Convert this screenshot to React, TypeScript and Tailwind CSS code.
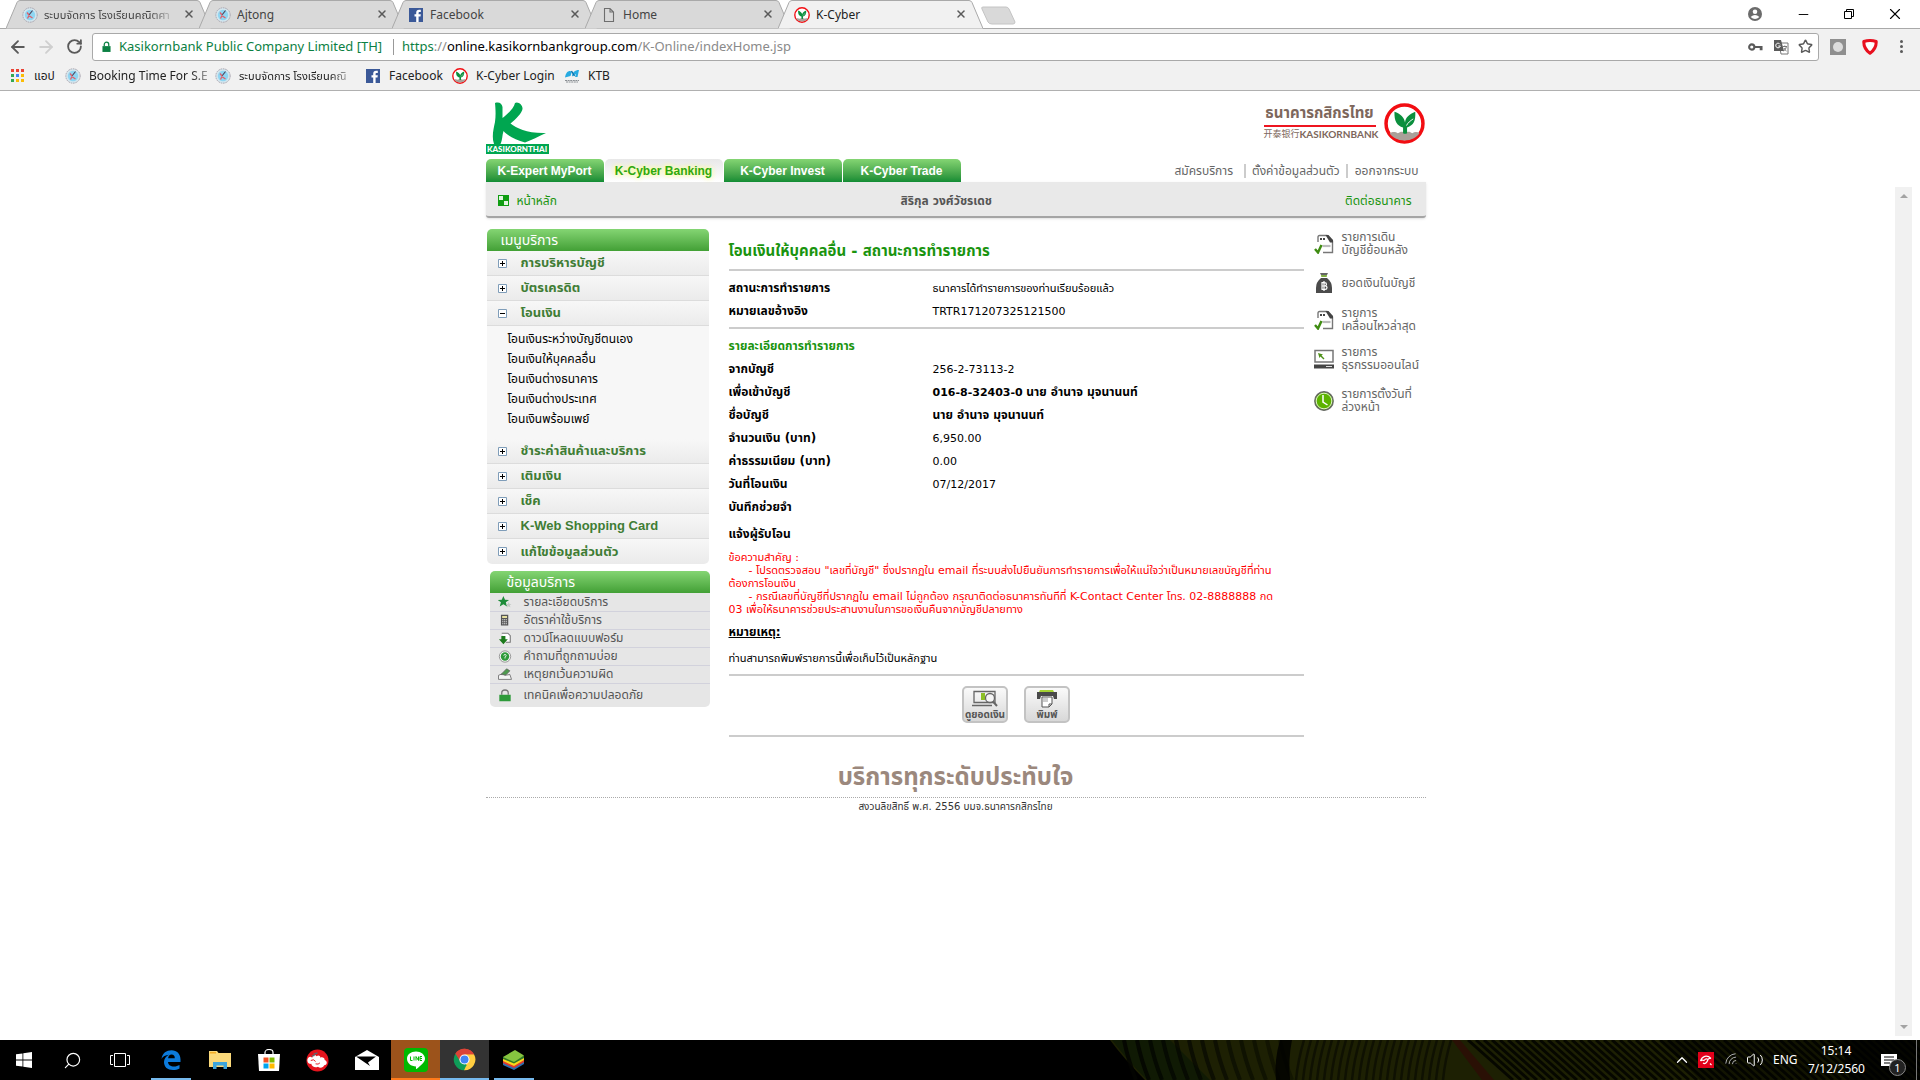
import React from "react";
import { Star, RotateCw, Search, Wifi, Volume2, ChevronUp, Minus, X, ArrowLeft, ArrowRight } from "lucide-react";

const ui = "font-['Noto_Sans','Noto_Sans_Thai',sans-serif]";
const body = "font-['DejaVu_Sans','Noto_Sans_Thai',sans-serif]";

function SchoolIcon() {
  return (
    <svg viewBox="0 0 16 16" className="size-4 shrink-0" aria-hidden="true">
      <circle cx="8" cy="8" r="7.2" fill="#d3e6ee" stroke="#a9a4ae" strokeWidth="1" strokeDasharray="1.6 .8" />
      <circle cx="8" cy="8" r="5.2" fill="#8fd6f2" />
      <path d="M10.500 3.500 7 8" stroke="#4a3b52" strokeWidth="1.100" />
      <path d="M5 5.500l2 2.500M7.500 9l3 2M5.500 11.500l1.500-3" stroke="#e0606a" strokeWidth="1.300" />
    </svg>
  );
}

function FacebookIcon() {
  return (
    <svg viewBox="0 0 16 16" className="size-4 shrink-0" aria-hidden="true">
      <path d="M1 1h14v14H1z" fill="#3b5998" />
      <path d="M8.200 15V9.400H6.500V7.200h1.700V5.700c0-1.900 1-2.900 2.900-2.900h1.700V5h-1.100c-.9 0-1.100.4-1.100 1v1.200h2.200l-.3 2.200h-1.900V15z" fill="#fff" />
    </svg>
  );
}

function PageIcon() {
  return (
    <svg viewBox="0 0 16 16" className="size-4 shrink-0" fill="none" stroke="#6e6e6e" strokeWidth="1.1" aria-hidden="true">
      <path d="M3.500 1.500h5.500l3.500 3.500v9.500h-9zM9 1.500V5h3.500" />
    </svg>
  );
}

function Emblem({ className }: { className: string }) {
  return (
    <svg viewBox="0 0 40 40" className={className} aria-hidden="true">
      <circle cx="20" cy="20" r="18" fill="#fff" stroke="#f20d12" strokeWidth="3.4" />
      <path d="M5.500 29.500c3-2 6-1.500 8 0 2.500-2 5-2 6.500-.5 3-1.500 5.500-1.500 7.500.5 2.500-1.500 5-1.500 7 0-3 4.500-8 7-14.500 7s-11.500-2.500-14.500-7z" fill="#aaa099" />
      <path d="M18.600 29.500V24C12.500 21.500 10 18.500 10.200 8.500c5.800 2 9.800 5.500 10.300 10.500.5-5 4-8 10-10.500.5 9-1.500 13-8 15.500v5.500q-2 1.200-3.900 0z" fill="#0b8f3d" />
      <path d="M22 22c1-2.500 3.500-4.500 6.500-6.500" stroke="#fff" strokeWidth=".9" fill="none" />
    </svg>
  );
}

function KtbIcon() {
  return (
    <svg viewBox="0 0 16 16" className="size-4 shrink-0" aria-hidden="true">
      <path d="M1 9.500C2 3.500 5 2 8 3.500L6.500 8zM8 8.500c0-4 3-6.500 7-6.500L13.500 9H11l1-3z" fill="#27aae1" />
      <path d="M7.500 3l3 5" stroke="#0b6ea8" strokeWidth="1.300" />
      <path d="M1 12.500h14M2 14h12" stroke="#8a8f94" strokeWidth="1" strokeDasharray="2 .6" />
    </svg>
  );
}

const tabs = [
  { title: "ระบบจัดการ โรงเรียนคณิตศา", icon: <SchoolIcon />, fade: true },
  { title: "Ajtong", icon: <SchoolIcon /> },
  { title: "Facebook", icon: <FacebookIcon /> },
  { title: "Home", icon: <PageIcon /> },
  { title: "K-Cyber", icon: <Emblem className="size-4 shrink-0" />, active: true },
];

function TabStrip() {
  return (
    <div className="flex h-[28px] items-stretch bg-white pl-[6px]">
      {tabs.map((t, i) => (
        <div key={i} className={`relative flex w-[205px] items-center pl-[16px] pr-[14px] ${i ? "-ml-[12px]" : ""} ${t.active ? "z-10" : ""}`}>
          <svg className="absolute inset-0 h-[29px] w-full" viewBox="0 0 205 29" preserveAspectRatio="none" aria-hidden="true">
            <path d="M0 28.500 11 2.500Q12 .5 14 .5H191Q193 .5 194 2.500L205 28.500" fill={t.active ? "#f1f1f1" : "#d9d9d9"} stroke="#a9a9a9" />
          </svg>
          <span className="relative flex pt-px">{t.icon}</span>
          <span className={`relative ml-[6px] flex-1 overflow-hidden whitespace-nowrap pt-px leading-5 ${t.active ? "text-[#222]" : "text-[#444]"} ${t.fade ? "text-[11px] [mask-image:linear-gradient(to_right,black_80%,transparent)]" : "text-[12px]"}`}>{t.title}</span>
          <button aria-label="ปิดแท็บ" className="relative ml-1 flex size-4 items-center justify-center text-[#5a5a5a]">
            <X size={12} strokeWidth={3} />
          </button>
        </div>
      ))}
      <button aria-label="แท็บใหม่" className="-ml-[2px] mt-[6px] h-[19px] w-[36px]">
        <svg viewBox="0 0 36 19" className="size-full" aria-hidden="true">
          <path d="M2 1h23q2 0 3 2l6 13q0 2-2 2H11q-3 0-4-2L1 3q-1-2 1-2z" fill="#d9d9d9" stroke="#c4c4c4" />
        </svg>
      </button>
      <div className="ml-auto flex items-center pr-[3px] text-black">
        <button aria-label="บัญชีผู้ใช้" className="flex w-[45px] justify-center">
          <svg viewBox="0 0 16 16" className="size-[14px]" aria-hidden="true">
            <circle cx="8" cy="8" r="8" fill="#6b6b6b" />
            <circle cx="8" cy="5.500" r="2.600" fill="#fff" />
            <path d="M3 11.500q5-4.500 10 0-5 4.500-10 0" fill="#fff" />
          </svg>
        </button>
        <button aria-label="ย่อ" className="ml-[4px] flex w-[45px] justify-center"><Minus size={15} strokeWidth={1.500} /></button>
        <button aria-label="คืนขนาด" className="flex w-[46px] justify-center">
          <svg viewBox="0 0 10 10" className="size-[10px]" fill="none" stroke="#000" aria-hidden="true">
            <path d="M.5 2.500h7v7h-7zM2.500 2.500v-2h7v7h-2" />
          </svg>
        </button>
        <button aria-label="ปิด" className="flex w-[45px] justify-center"><X size={18} strokeWidth={1.500} /></button>
      </div>
    </div>
  );
}

function Toolbar() {
  return (
    <div className="flex h-[36px] items-center border-t border-[#a9a9a9] bg-[#f1f1f1] text-[#5a5a5a]">
      <button aria-label="ย้อนกลับ" className="ml-[8px] flex w-5 justify-center"><ArrowLeft size={20} strokeWidth={2.200} /></button>
      <button aria-label="ไปข้างหน้า" className="ml-[8px] flex w-5 justify-center text-[#cfcfcf]"><ArrowRight size={20} strokeWidth={2.200} /></button>
      <button aria-label="โหลดซ้ำ" className="ml-[8px] flex w-5 justify-center"><RotateCw size={17} strokeWidth={2.600} /></button>
      <div className="ml-[8px] flex h-[28px] flex-1 items-center rounded-[3px] border border-[#a9a9a9] bg-white pl-[9px]">
        <svg viewBox="0 0 10 12" className="h-3 w-[9px]" aria-hidden="true">
          <path d="M.5 5h9v6.500h-9z" fill="#0b8043" />
          <path d="M2.500 5V3.200a2.500 2.500 0 0 1 5 0V5" fill="none" stroke="#0b8043" strokeWidth="1.400" />
        </svg>
        <span className="ml-[8px] whitespace-nowrap text-[13px] text-[#0b8043]">Kasikornbank Public Company Limited [TH]</span>
        <span className="ml-[11px] h-[16px] w-px bg-[#999]" />
        <div className="ml-[8px] flex-1 whitespace-nowrap text-[13px] text-[#8a8a8a]">
          <span className="text-[#0b8043]">https</span>://<span className="text-black">online.kasikornbankgroup.com</span>/K-Online/indexHome.jsp
        </div>
        <button aria-label="รหัสผ่าน" className="flex w-[25px] justify-center">
          <svg viewBox="0 0 16 8" className="h-2 w-[15px]" aria-hidden="true">
            <circle cx="4" cy="4" r="2.800" fill="none" stroke="#5a5a5a" strokeWidth="2.200" />
            <path d="M7 3h8.500v4.500h-3V5H7z" fill="#5a5a5a" />
          </svg>
        </button>
        <button aria-label="แปลภาษา" className="flex w-[25px] justify-center">
          <svg viewBox="0 0 16 16" className="size-4" aria-hidden="true">
            <path d="M6 4h9v11H8z" fill="#fff" stroke="#777" />
            <path d="M1 1h7l3 11H1z" fill="#5a5a5a" />
            <path d="M7 5.300A2.300 2.300 0 1 0 7.300 7H5.300" fill="none" stroke="#fff" />
            <path d="M9.500 7.500h4.500M11.800 6.500v1M10.500 12q2.500-1.500 2.800-4M11 9q.8 2 2.500 3" fill="none" stroke="#777" />
          </svg>
        </button>
        <button aria-label="บุ๊กมาร์ก" className="flex w-[25px] justify-center"><Star size={15} strokeWidth={2.300} /></button>
      </div>
      <button aria-label="ส่วนขยาย" className="ml-[11px] flex size-4 items-center justify-center bg-[#8f8f8f]"><span className="size-[10px] rounded-full bg-[#dcdcdc]" /></button>
      <button aria-label="โล่ป้องกัน" className="ml-[16px]">
        <svg viewBox="0 0 16 16" className="size-4" aria-hidden="true">
          <path d="M1.800 2.500Q8 .5 14.200 2.500 14.500 9.500 8 14.300 1.500 9.500 1.800 2.500z" fill="#fff" stroke="#e8101f" strokeWidth="3" strokeLinejoin="round" />
        </svg>
      </button>
      <button aria-label="เมนู" className="ml-[22px] mr-[16px] flex w-1 flex-col gap-[2px]">
        <span className="size-[3px] rounded-full bg-[#5a5a5a]" /><span className="size-[3px] rounded-full bg-[#5a5a5a]" /><span className="size-[3px] rounded-full bg-[#5a5a5a]" />
      </button>
    </div>
  );
}

const appColors = ["#ea4335", "#ea4335", "#ea4335", "#34a853", "#4285f4", "#fbbc05", "#34a853", "#fbbc05", "#fbbc05"];

function BookmarkBar() {
  return (
    <nav className="flex h-[27px] items-center border-b border-[#b0b0b0] bg-[#f1f1f1] pb-[3px] pl-[11px] text-[12px] leading-5 text-[#222]">
      <a href="#apps" className="flex w-[54px] items-center gap-[10px]">
        <span className="grid grid-cols-3 gap-[2px]">
          {appColors.map((c, i) => <span key={i} className="size-[3px]" style={{ backgroundColor: c }} />)}
        </span>
        แอป
      </a>
      <a href="#booking" className="flex w-[150px] items-center gap-[8px] whitespace-nowrap"><SchoolIcon /><span className="[mask-image:linear-gradient(to_right,black_85%,#0006)]">Booking Time For S.E</span></a>
      <a href="#school" className="flex w-[150px] items-center gap-[8px] whitespace-nowrap"><SchoolIcon /><span className="text-[11px] [mask-image:linear-gradient(to_right,black_85%,#0006)]">ระบบจัดการ โรงเรียนคณิ</span></a>
      <a href="#facebook" className="flex w-[87px] items-center gap-[8px]"><FacebookIcon />Facebook</a>
      <a href="#kcyber" className="flex w-[112px] items-center gap-[8px] whitespace-nowrap"><Emblem className="size-4 shrink-0" />K-Cyber Login</a>
      <a href="#ktb" className="flex items-center gap-[8px]"><KtbIcon />KTB</a>
    </nav>
  );
}

function BankHeader() {
  return (
    <header>
      <div className="flex h-[68px] items-start justify-between pt-[11px]">
        <div className="w-[63px]">
          <svg viewBox="0 0 63 42" className="block h-[42px] w-full" aria-hidden="true">
            <path d="M9 1c4-1.500 7 .5 7.500 4v11C22 12 28 6 29 1c3-2 8 2 7.500 6C36 11 30 17 24.500 21.500 31 26.500 41 31.500 60 31c-7 3.500-15 7-21 9.500C30 38 22 34 17.500 29c-1.500 5-1 9-3 13H8C5.500 35 7.500 27 9 20c1-7 .5-14 0-19z" fill="#00a650" />
          </svg>
          <div className="bg-[#00a650] text-center font-['Lato',sans-serif] text-[8px] font-black leading-[10px] text-white">KASIKORNTHAI</div>
        </div>
        <div className="flex items-start pr-px pt-px">
          <div className="mr-[8px] w-[112px] text-[#7d675c]">
            <div className="whitespace-nowrap border-b-2 border-[#ee1520] pb-[2px] text-center text-[15px] font-bold leading-[20px]">ธนาคารกสิกรไทย</div>
            <div className="mt-[2px] flex items-center justify-between whitespace-nowrap leading-[10px]"><span className="font-['Noto_Sans_CJK_SC',sans-serif] text-[9px]">开泰银行</span><span className="font-['Lato',sans-serif] text-[10px] font-bold">KASIKORNBANK</span></div>
          </div>
          <Emblem className="size-[41px]" />
        </div>
      </div>
      <div className="flex h-[23px] items-center justify-between">
        <nav className="flex gap-px font-['Liberation_Sans',sans-serif] text-[12px] font-bold leading-[23px] text-white">
          {["K-Expert MyPort", "K-Cyber Banking", "K-Cyber Invest", "K-Cyber Trade"].map((t, i) => (
            <a key={t} href="#tab" className={`h-[23px] w-[118px] rounded-t-[5px] pt-px text-center ${i === 1 ? "bg-linear-to-b from-[#e8e8e8] to-white text-[#2fa80f] [text-shadow:0_0_5px_#ff9,0_0_5px_#ff9]" : "bg-linear-to-b from-[#84d573] to-[#0f8c34]"}`}>{t}</a>
          ))}
        </nav>
        <nav className="flex items-center whitespace-nowrap pr-[7px] text-[12px] leading-[14px] text-[#666]">
          <a href="#apply" className="border-r-2 border-[#ccc] pr-[11px]">สมัครบริการ</a>
          <a href="#settings" className="border-r-2 border-[#ccc] px-[6px]">ตั้งค่าข้อมูลส่วนตัว</a>
          <a href="#logout" className="pl-[7px]">ออกจากระบบ</a>
        </nav>
      </div>
      <div className="flex h-[36px] items-center rounded-b-[3px] border-b-2 border-[#a5a5a5] bg-[#e9e9e9] pl-[12px] pr-[14px] pt-[4px] text-[12px] text-[#1a940f] shadow-sm">
        <a href="#home" className="flex w-[403px] items-center gap-[8px]">
          <svg viewBox="0 0 11 11" className="mb-[2px] size-[11px]" aria-hidden="true"><path d="M0 0h11v11H0z" fill="#0f9d12" /><path d="M1 1h4v4H1zM6 6h4v4H6z" fill="#e4f6e2" /></svg>
          หน้าหลัก
        </a>
        <span className="text-[12px] font-bold text-[#555]">สิริกุล วงศ์วัชรเดช</span>
        <a href="#contact" className="ml-auto">ติดต่อธนาคาร</a>
      </div>
    </header>
  );
}

function MenuRow({ label, open, last }: { label: string; open?: boolean; last?: boolean }) {
  return (
    <button className={`flex h-[25px] w-full items-center whitespace-nowrap bg-linear-to-b from-[#f7f7f7] to-[#ebebeb] pl-[11px] text-left font-['Liberation_Sans','Noto_Sans_Thai',sans-serif] text-[13px] font-bold text-[#3f7d35] ${last ? "rounded-b-[5px]" : "border-b border-[#dcdcdc]"}`} aria-expanded={!!open}>
      <svg viewBox="0 0 9 9" className="mr-[14px] size-[9px]" aria-hidden="true">
        <path d="M.5.5h8v8h-8z" fill="#fff" stroke="#7f9db9" />
        <path d={open ? "M2 4.500h5" : "M2 4.500h5M4.500 2v5"} stroke="#000" />
      </svg>
      {label}
    </button>
  );
}

const infoIcons = [
  <path key="a" d="M6 0l2 4.500 5 .3-4 3 1.500 5L6 10l-4.500 2.800L3 7.800-1 4.800l5-.3z" fill="#1e8c3a" />,
  <g key="b"><path d="M3 1h9v13H3z" fill="#555" /><path d="M4.500 2.500h6v2.500h-6z" fill="#e6e0a0" /><path d="M4.500 7h6M4.500 9.500h6M4.500 12h6" stroke="#ddd" strokeWidth="1.300" strokeDasharray="1.500 .7" /></g>,
  <g key="c"><path d="M4 1.500h7.500l3 3v8H9" fill="#fff" stroke="#777" strokeWidth="1.300" /><path d="M3.500 5h5v4h3L6 15 .5 9h3z" fill="#1c7a1c" /></g>,
  <g key="d"><circle cx="8" cy="8" r="7" fill="#f5f5f5" stroke="#888" /><circle cx="8" cy="8" r="5.200" fill="#2e9a3a" /><path d="M6.500 7q0-1.500 1.500-1.500T9.500 7q0 1-1.500 1.500v2" stroke="#fff" fill="none" /></g>,
  <g key="e"><path d="M0 9l5-2 3 2 6-1 2 6H0z" fill="#f5f5f5" stroke="#666" /><path d="M3 8l7-7 4 2.500-5 5z" fill="#4d9b4d" stroke="#666" /></g>,
  <g key="f"><path d="M1 7h14v8H1z" fill="#2e9a3a" /><path d="M4 7V5a4 3.800 0 0 1 8 0v2" stroke="#777" strokeWidth="1.600" fill="none" /></g>,
];
const infoItems = ["รายละเอียดบริการ", "อัตราค่าใช้บริการ", "ดาวน์โหลดแบบฟอร์ม", "คำถามที่ถูกถามบ่อย", "เหตุยกเว้นความผิด", "เทคนิคเพื่อความปลอดภัย"];

function Sidebar() {
  return (
    <aside className="w-[224px] pl-px">
      <h2 className="h-[22px] w-[222px] rounded-t-[5px] bg-linear-to-b from-[#84d573] to-[#42a035] pl-[14px] text-[14px] leading-[22px] text-white">เมนูบริการ</h2>
      <div className="w-[222px]">
        <MenuRow label="การบริหารบัญชี" />
        <MenuRow label="บัตรเครดิต" />
        <MenuRow label="โอนเงิน" open />
        <ul className="h-[113px] bg-[#f7f7f7] pl-[21px] pt-[3px] text-[12px] leading-[20px] text-black">
          {["โอนเงินระหว่างบัญชีตนเอง", "โอนเงินให้บุคคลอื่น", "โอนเงินต่างธนาคาร", "โอนเงินต่างประเทศ", "โอนเงินพร้อมเพย์"].map((t) => (
            <li key={t}><a href="#transfer">{t}</a></li>
          ))}
        </ul>
        <MenuRow label="ชำระค่าสินค้าและบริการ" />
        <MenuRow label="เติมเงิน" />
        <MenuRow label="เช็ค" />
        <MenuRow label="K-Web Shopping Card" />
        <MenuRow label="แก้ไขข้อมูลส่วนตัว" last />
      </div>
      <section className="ml-[3px] mt-[7px] w-[220px]">
        <h2 className="h-[22px] rounded-t-[5px] bg-linear-to-b from-[#84d573] to-[#42a035] pl-[17px] text-[14px] leading-[22px] text-white">ข้อมูลบริการ</h2>
        <ul className="overflow-hidden rounded-b-[5px] bg-[#e6e6e6] pb-[3px] pt-px text-[12px] text-[#555]">
          {infoItems.map((t, i) => (
            <li key={t} className={`border-[#d2d2dc] ${i < 5 ? "border-b" : "pt-[3px]"}`}>
              <a href="#info" className="flex h-[17px] items-center whitespace-nowrap pl-[8px] leading-[17px]">
                <svg viewBox="0 0 16 16" className="mr-[12px] h-[13px] w-[14px]" aria-hidden="true">
                  {infoIcons[i]}
                  {i === 0 && <path d="M12.500 7.500l1 2.300 2.500.2-2 1.500.7 2.500-2.200-1.300-2.200 1.300.7-2.500-2-1.500 2.500-.2z" fill="#c3c9c5" />}
                </svg>
                {t}
              </a>
            </li>
          ))}
        </ul>
      </section>
    </aside>
  );
}

type Row = [string, React.ReactNode];
const payeeName = <b className="text-[12px]">นาย อำนาจ มุจนานนท์</b>;
const rows: Row[] = [
  ["จากบัญชี", "256-2-73113-2"],
  ["เพื่อเข้าบัญชี", <><b>016-8-32403-0</b> {payeeName}</>],
  ["ชื่อบัญชี", payeeName],
  ["จำนวนเงิน (บาท)", "6,950.00"],
  ["ค่าธรรมเนียม (บาท)", "0.00"],
  ["วันที่โอนเงิน", "07/12/2017"],
  ["บันทึกช่วยจำ", ""],
];

function Rows({ data }: { data: Row[] }) {
  return (
    <table className="w-full text-left leading-[23px]">
      <tbody>
        {data.map(([k, v]) => (
          <tr key={k} className="h-[23px]"><th className="w-[204px] p-0 text-[12px] font-bold">{k}</th><td className="p-0">{v}</td></tr>
        ))}
      </tbody>
    </table>
  );
}

function ActionButton({ label, children }: { label: string; children: React.ReactNode }) {
  return (
    <button className="flex h-[37px] w-[46px] flex-col items-center rounded-[5px] border-2 border-[#c3c3c3] bg-linear-to-b from-[#fafafa] to-[#d8d8d8] pt-[2px] text-[#555]">
      <svg viewBox="0 0 26 18" className="h-[18px] w-[26px]" fill="none" aria-hidden="true">{children}</svg>
      <span className="whitespace-nowrap text-[10px] font-bold leading-[13px]">{label}</span>
    </button>
  );
}

function Detail() {
  return (
    <main className="ml-[19px] min-w-0 flex-1 pt-[8px] text-[11px] leading-[13px] text-black">
      <h1 className="h-[34px] border-b-2 border-[#ccc] text-[15px] font-bold leading-[28px] text-[#1a940f]">โอนเงินให้บุคคลอื่น - สถานะการทำรายการ</h1>
      <div className="h-[58px] border-b-2 border-[#ccc] pt-[6px]">
        <Rows data={[["สถานะการทำรายการ", "ธนาคารได้ทำรายการของท่านเรียบร้อยแล้ว"], ["หมายเลขอ้างอิง", "TRTR171207325121500"]]} />
      </div>
      <h2 className="pt-[6px] text-[12px] font-bold leading-[23px] text-[#1a940f]">รายละเอียดการทำรายการ</h2>
      <Rows data={rows} />
      <p className="mt-[9px] text-[12px] font-bold">แจ้งผู้รับโอน</p>
      <div className="mt-[10px] h-[65px] whitespace-nowrap text-[#f00]">
        <p>ข้อความสำคัญ :</p>
        <p className="pl-[20px]">- โปรดตรวจสอบ "เลขที่บัญชี" ซึ่งปรากฏใน email ที่ระบบส่งไปยืนยันการทำรายการเพื่อให้แน่ใจว่าเป็นหมายเลขบัญชีที่ท่าน</p>
        <p>ต้องการโอนเงิน</p>
        <p className="pl-[20px]">- กรณีเลขที่บัญชีที่ปรากฏใน email ไม่ถูกต้อง กรุณาติดต่อธนาคารทันทีที่ K-Contact Center โทร. 02-8888888 กด</p>
        <p>03 เพื่อให้ธนาคารช่วยประสานงานในการขอเงินคืนจากบัญชีปลายทาง</p>
      </div>
      <p className="mt-[10px] text-[12px] font-bold underline">หมายเหตุ:</p>
      <p className="mt-[13px]">ท่านสามารถพิมพ์รายการนี้เพื่อเก็บไว้เป็นหลักฐาน</p>
      <div className="mt-[9px] flex justify-center gap-[16px] border-y-2 border-[#ccc] pb-[12px] pt-[10px]">
        <ActionButton label="ดูยอดเงิน">
          <path d="M2 1.500h21v11H2zM0 15.500h20" stroke="#666" strokeWidth="1.300" />
          <path d="M9 3h4v7H9z" fill="#8cbf26" />
          <circle cx="18" cy="8" r="4.500" fill="#f5f5f5" stroke="#666" strokeWidth="1.300" />
          <path d="M21 11.500l4 4.500" stroke="#666" strokeWidth="2" />
        </ActionButton>
        <ActionButton label="พิมพ์">
          <path d="M6 0h13l1 2H5z" fill="#a4d233" />
          <path d="M3 2h20v7h-3l-1-3H7L6 9H3z" fill="#4a4a4a" />
          <path d="M8 7h10v7l-3 3H8z" fill="#fff" stroke="#555" />
          <path d="M9 8h5v4H9z" fill="#ccc" />
          <path d="M15 17v-3h3" stroke="#555" />
        </ActionButton>
      </div>
    </main>
  );
}

const doc = (
  <g>
    <path d="M4 8V3Q4 1.500 5.500 1.500H13l5.500 5.500V18.500H9" fill="none" stroke="#777" strokeWidth="1.400" />
    <path d="M11.500 1h3L19 6v2.500h-3z" fill="#444" /><path d="M6 5h5" stroke="#444" strokeWidth="2" strokeDasharray="2 1" /><path d="M8.500 12h8" stroke="#bbb" strokeWidth="2.200" />
    <path d="M1 15l3 3.500 3.500-7.500" fill="none" stroke="#3f8c12" strokeWidth="2.400" />
  </g>
);
const quick = [
  { lines: ["รายการเดิน", "บัญชีย้อนหลัง"], gap: "mt-[2px]", icon: doc },
  { lines: ["ยอดเงินในบัญชี"], gap: "mt-[14px]", icon: <g><path d="M6 0h8l-2 4H8z" fill="#666" /><path d="M7 3h6" stroke="#8bc53f" strokeWidth="1.500" /><path d="M7 5h6q5 4 5 10v5H2v-5Q2 9 7 5z" fill="#4b4b4b" /><path d="M8 9v7.400M7.500 9.700h3q2 0 2 1.600T10.500 13H8h3q2 0 2 1.700t-2 1.700H7.500M10 8v10" stroke="#fff" strokeWidth="1.200" fill="none" /></g> },
  { lines: ["รายการ", "เคลื่อนไหวล่าสุด"], gap: "mt-[12px]", icon: doc },
  { lines: ["รายการ", "ธุรกรรมออนไลน์"], gap: "mt-[13px]", icon: <g><path d="M1 1.500h18v11.500H1z" fill="#fff" stroke="#777" strokeWidth="1.500" /><path d="M4 4l5 1.500-1.500 1 3 3-1 1-3-3L5.500 9z" fill="#4c8f16" /><path d="M0 15.500h20v4H0z" fill="#444" /><path d="M12 17.500h6" stroke="#ddd" /></g> },
  { lines: ["รายการตั้งวันที่", "ล่วงหน้า"], gap: "mt-[16px]", icon: <g><circle cx="10" cy="10" r="9.200" fill="#5cb300" stroke="#666" strokeWidth="1.400" /><circle cx="10" cy="10" r="7.800" fill="none" stroke="#dff0c8" strokeWidth="1" /><path d="M9 4v7l4.500 3" fill="none" stroke="#fff" strokeWidth="1.500" /></g> },
];

function QuickLinks() {
  return (
    <nav className="ml-[10px] w-[112px] text-[12px] leading-[13px] text-[#666]">
      {quick.map((q, i) => (
        <a key={i} href="#quick" className={`flex min-h-[24px] items-center gap-[8px] whitespace-nowrap ${q.gap}`}>
          <svg viewBox="0 0 20 20" className="size-5 shrink-0" aria-hidden="true">{q.icon}</svg>
          <span>{q.lines.map((l) => <span key={l} className="block">{l}</span>)}</span>
        </a>
      ))}
    </nav>
  );
}

function LeafWallpaper() {
  return (
    <svg viewBox="0 0 820 40" preserveAspectRatio="none" className="absolute inset-y-0 right-0 h-full w-[820px]" aria-hidden="true">
      <path d="M10 0H820V40H45Q25 20 10 0z" fill="#1d2003" />
      <path d="M12 0Q27 20 47 40H110L70 0z" fill="#101a04" />
      {Array.from({ length: 13 }, (_, i) => (
        <path key={i} d={`M${24 + i * 13} 0q4 20 12 40`} stroke="#030501" strokeWidth="4" fill="none" opacity={0.85 - i * 0.04} />
      ))}
      <path d="M180 0h12q-4 20-2 40h-14q-2-20 4-40z" fill="#000" opacity=".8" />
      {Array.from({ length: 22 }, (_, i) => (
        <path key={i} d={`M${204 + i * 7} 0q-6 20-8 40`} stroke="#0c0e02" strokeWidth="2.500" fill="none" opacity=".8" />
      ))}
      <path d="M352 0l30 40h12L360 0z" fill="#2a1005" />
      {Array.from({ length: 56 }, (_, i) => (
        <path key={i} d={`M${368 + i * 8} 0l45 40`} stroke="#020300" strokeWidth="3" opacity=".85" />
      ))}
      <path d="M560 0H820V40H600z" fill="#000" opacity=".35" />
      <path d="M740 0h80v40h-70z" fill="#000" opacity=".7" />
    </svg>
  );
}

function Taskbar() {
  const cell = "relative flex h-full w-[49px] items-center justify-center";
  const line = "absolute bottom-0 h-[2px] w-[40px] bg-[#76b9ed]";
  return (
    <footer className="relative flex h-[40px] items-center bg-black text-white">
      <LeafWallpaper />
      <button aria-label="เริ่ม" className="flex h-full w-[48px] items-center justify-center">
        <svg viewBox="0 0 16 16" className="size-4" fill="#fff" aria-hidden="true"><path d="M0 2.300 6.500 1.400v6.200H0zM7.300 1.300 16 0v7.600H7.300zM0 8.400h6.500v6.200L0 13.700zM7.300 8.400H16V16l-8.700-1.300z" /></svg>
      </button>
      <button aria-label="ค้นหา" className="flex h-full w-[48px] items-center justify-center">
        <Search size={19} strokeWidth={1.500} className="-scale-x-100" />
      </button>
      <button aria-label="มุมมองงาน" className="flex h-full w-[48px] items-center justify-center">
        <svg viewBox="0 0 20 14" className="h-[14px] w-5" fill="none" stroke="#fff" aria-hidden="true"><path d="M4.500.5h11v13h-11zM3 2.500H.5v9H3M17 2.500h2.500v9H17" /></svg>
      </button>
      <button aria-label="Edge" className={`${cell} ml-[2px]`}>
        <svg viewBox="0 0 20 20" className="size-5" aria-hidden="true"><path d="M.5 9C1.500 3 5.500.3 10.500.3c5.500 0 9 3.900 9 9V12H7c.2 3 2.700 4.500 6 4.500 2 0 4-.6 5.500-1.500v3.500c-2 1-4 1.500-6.500 1.500-5.500 0-9-3-9-8 0-3.300 2-6 5-7.300C4.500 5 1.700 6.500.5 9zm6.600-.8h6.700C13.800 6 12.700 4.600 10.600 4.600c-2 0-3.200 1.600-3.500 3.600z" fill="#0c7bdc" /></svg>
        <span className={line} />
      </button>
      <button aria-label="File Explorer" className={cell}>
        <svg viewBox="0 0 22 18" className="h-[18px] w-[22px]" aria-hidden="true"><path d="M0 0h8l1.500 2H22v14H0z" fill="#fbd97a" /><path d="M1 1h6v1.500H1z" fill="#f3ad26" /><path d="M4 18v-7h14v7h-3.500v-3.500h-7V18z" fill="#3ca5dc" /></svg>
      </button>
      <button aria-label="Store" className={cell}>
        <svg viewBox="0 0 22 22" className="size-[22px]" aria-hidden="true"><path d="M7 6V3.500a4 3 0 0 1 8 0V6" fill="none" stroke="#fff" strokeWidth="1.200" /><path d="M0 5h22l-1 17H1z" fill="#fff" /><path d="M5.500 8.500h5v5h-5z" fill="#f25022" /><path d="M11.500 8.500h5v5h-5z" fill="#7fba00" /><path d="M5.500 14.500h5v5h-5z" fill="#00a4ef" /><path d="M11.500 14.500h5v5h-5z" fill="#ffb900" /></svg>
      </button>
      <button aria-label="Garena" className={cell}>
        <svg viewBox="0 0 24 24" className="size-[23px]" aria-hidden="true"><circle cx="12" cy="12" r="11.500" fill="#e5141d" /><path d="M1.500 11c1-3 3-3.500 5-2 .5-3 3-3.500 4.500-1.500 1.500-1.500 4-1 4 1.500 2-1 4.500 0 4.500 2.500 3 1 3 5-.5 5.500-1 3-5 3-6.500 1.500-3 1.500-6.500 0-7-3-3 .5-4.500-2-4-4.500z" fill="#fff" /><path d="M5 12q3-2 5 1M10 15.500q3 1 4.500-1" stroke="#e5141d" fill="none" /><path d="M8 5.500l4-1.500M6 7.500l3-1" stroke="#5c6a70" strokeWidth="1.500" /></svg>
      </button>
      <button aria-label="Mail" className={cell}>
        <svg viewBox="0 0 24 20" className="h-5 w-6" aria-hidden="true"><path d="M0 7 12 0l12 7v13H0z" fill="#fff" /><path d="M1 6.500h20L13 12.500l2 3.500z" fill="#000" /></svg>
      </button>
      <button aria-label="LINE" className={`${cell} border-b-2 border-[#ff7a1a] bg-[#9c531b]`}>
        <svg viewBox="0 0 24 24" className="mt-[2px] size-6" aria-hidden="true"><rect width="24" height="24" rx="4" fill="#00b900" /><path d="M12 3.500c5 0 9 3.200 9 7.200 0 3.500-4 6.500-8.500 10.300-.8.500-.5-1.500-.5-2.500-5-.2-9-3.500-9-7.800s4-7.200 9-7.200z" fill="#fff" /><path d="M6.500 8.500v4h2M10 8.500v4M12 12.500v-4l2.500 4v-4M18 8.500h-2v4h2M16 10.500h2" stroke="#00b900" fill="none" /></svg>
      </button>
      <button aria-label="Chrome" className={`${cell} border-b-2 border-[#76b9ed] bg-[#333]`}>
        <svg viewBox="0 0 24 24" className="size-[23px]" aria-hidden="true"><path d="M12 12 2.500 6A11.300 11.300 0 0 1 21.900 6.500z" fill="#db4437" /><path d="M12 12V6.500h9.900A11.300 11.300 0 0 1 11.500 23.300z" fill="#ffcd40" /><path d="M12 12l2 6-2.500 5.300A11.300 11.300 0 0 1 2.500 6z" fill="#0f9d58" /><path d="M12 6.500h9.900A11.300 11.300 0 0 0 2.500 6L7 13z" fill="#db4437" /><circle cx="12" cy="12" r="5.300" fill="#fff" /><circle cx="12" cy="12" r="4.200" fill="#4285f4" /></svg>
      </button>
      <button aria-label="BlueStacks" className={cell}>
        <svg viewBox="0 0 22 20" className="h-5 w-[22px]" aria-hidden="true"><path d="M0 13v2l11 5 10-6v-2z" fill="#2a6fb0" /><path d="M0 11v2l11 5 10-6v-2z" fill="#e23b2e" /><path d="M0 9v2l11 5 10-6V8z" fill="#f9d71c" /><path d="M0 7v2l11 4.500L21 8V6z" fill="#2f7a22" /><path d="M0 7 12 0l9 5.500L11 12z" fill="#86c440" /></svg>
        <span className={line} />
      </button>
      <div className="relative flex h-full flex-1 items-center justify-end pr-[3px]">
        <ChevronUp size={18} strokeWidth={1.700} />
        <span className="ml-[7px] flex size-4 items-center justify-center bg-[#e2001a]">
          <svg viewBox="0 0 16 16" className="size-4" fill="none" stroke="#fff" strokeWidth="1.200" aria-hidden="true"><path d="M2.500 9C4 4 9 2.500 13 6.500M2.500 9q1.500-1.500 3.500-.5Q8 6 10 7.500q.5-1.500 3-1M10 7.500c-1 3-3 5-5 3.500M12 11.500l1.500 1.500" /></svg>
        </span>
        <Wifi size={16} strokeWidth={1.300} className="ml-[10px] -rotate-45 text-[#bbb]" />
        <Volume2 size={18} strokeWidth={1.300} className="ml-[6px]" />
        <span className="ml-[9px] w-[24px] text-[12px]">ENG</span>
        <div className="ml-[11px] w-[56px] whitespace-nowrap text-center text-[12px] leading-[18px]">15:14<br />7/12/2560</div>
        <button aria-label="การแจ้งเตือน" className="relative ml-[16px] mr-[10px] h-6 w-[26px]">
          <svg viewBox="0 0 18 18" className="mt-[2px] size-[18px]" aria-hidden="true"><path d="M1 2h16v12h-4v3.500L9.500 14H1z" fill="#fff" /><path d="M4 5h10M4 8h10M4 11h6" stroke="#000" strokeWidth="1.200" /></svg>
          <span className="absolute -bottom-1 right-0 flex size-[17px] items-center justify-center rounded-full border border-[#888] bg-[#222] text-[11px] leading-none">1</span>
        </button>
        <span className="h-full w-px bg-[#777]" />
      </div>
    </footer>
  );
}

export default function App() {
  return (
    <div className={`flex min-h-screen flex-col bg-white ${ui}`}>
      <TabStrip />
      <Toolbar />
      <BookmarkBar />
      <div className={`flex flex-1 pr-[8px] ${body}`}>
        <div className="min-w-0 flex-1 pl-[16px]">
          <div className="mx-auto max-w-[940px]">
            <BankHeader />
            <div className="mt-[11px] flex items-start">
              <Sidebar />
              <Detail />
              <QuickLinks />
            </div>
            <div className="mt-[24px] border-b border-dotted border-[#aaa] pb-[4px] text-center text-[24px] font-bold leading-[32px] text-[#9b887d]">บริการทุกระดับประทับใจ</div>
            <div className="pt-[2px] text-center text-[10px] leading-[14px] text-[#333]">สงวนลิขสิทธิ์ พ.ศ. 2556 บมจ.ธนาคารกสิกรไทย</div>
          </div>
        </div>
        <div className="mb-[4px] mt-[96px] flex w-[17px] flex-col items-center justify-between bg-[#f1f1f1] py-[6px]" aria-hidden="true">
          <svg viewBox="0 0 8 5" className="h-[5px] w-2"><path d="M0 5l4-4 4 4z" fill="#a3a3a3" /></svg>
          <svg viewBox="0 0 8 5" className="h-[5px] w-2"><path d="M0 0l4 4 4-4z" fill="#a3a3a3" /></svg>
        </div>
      </div>
      <Taskbar />
    </div>
  );
}
